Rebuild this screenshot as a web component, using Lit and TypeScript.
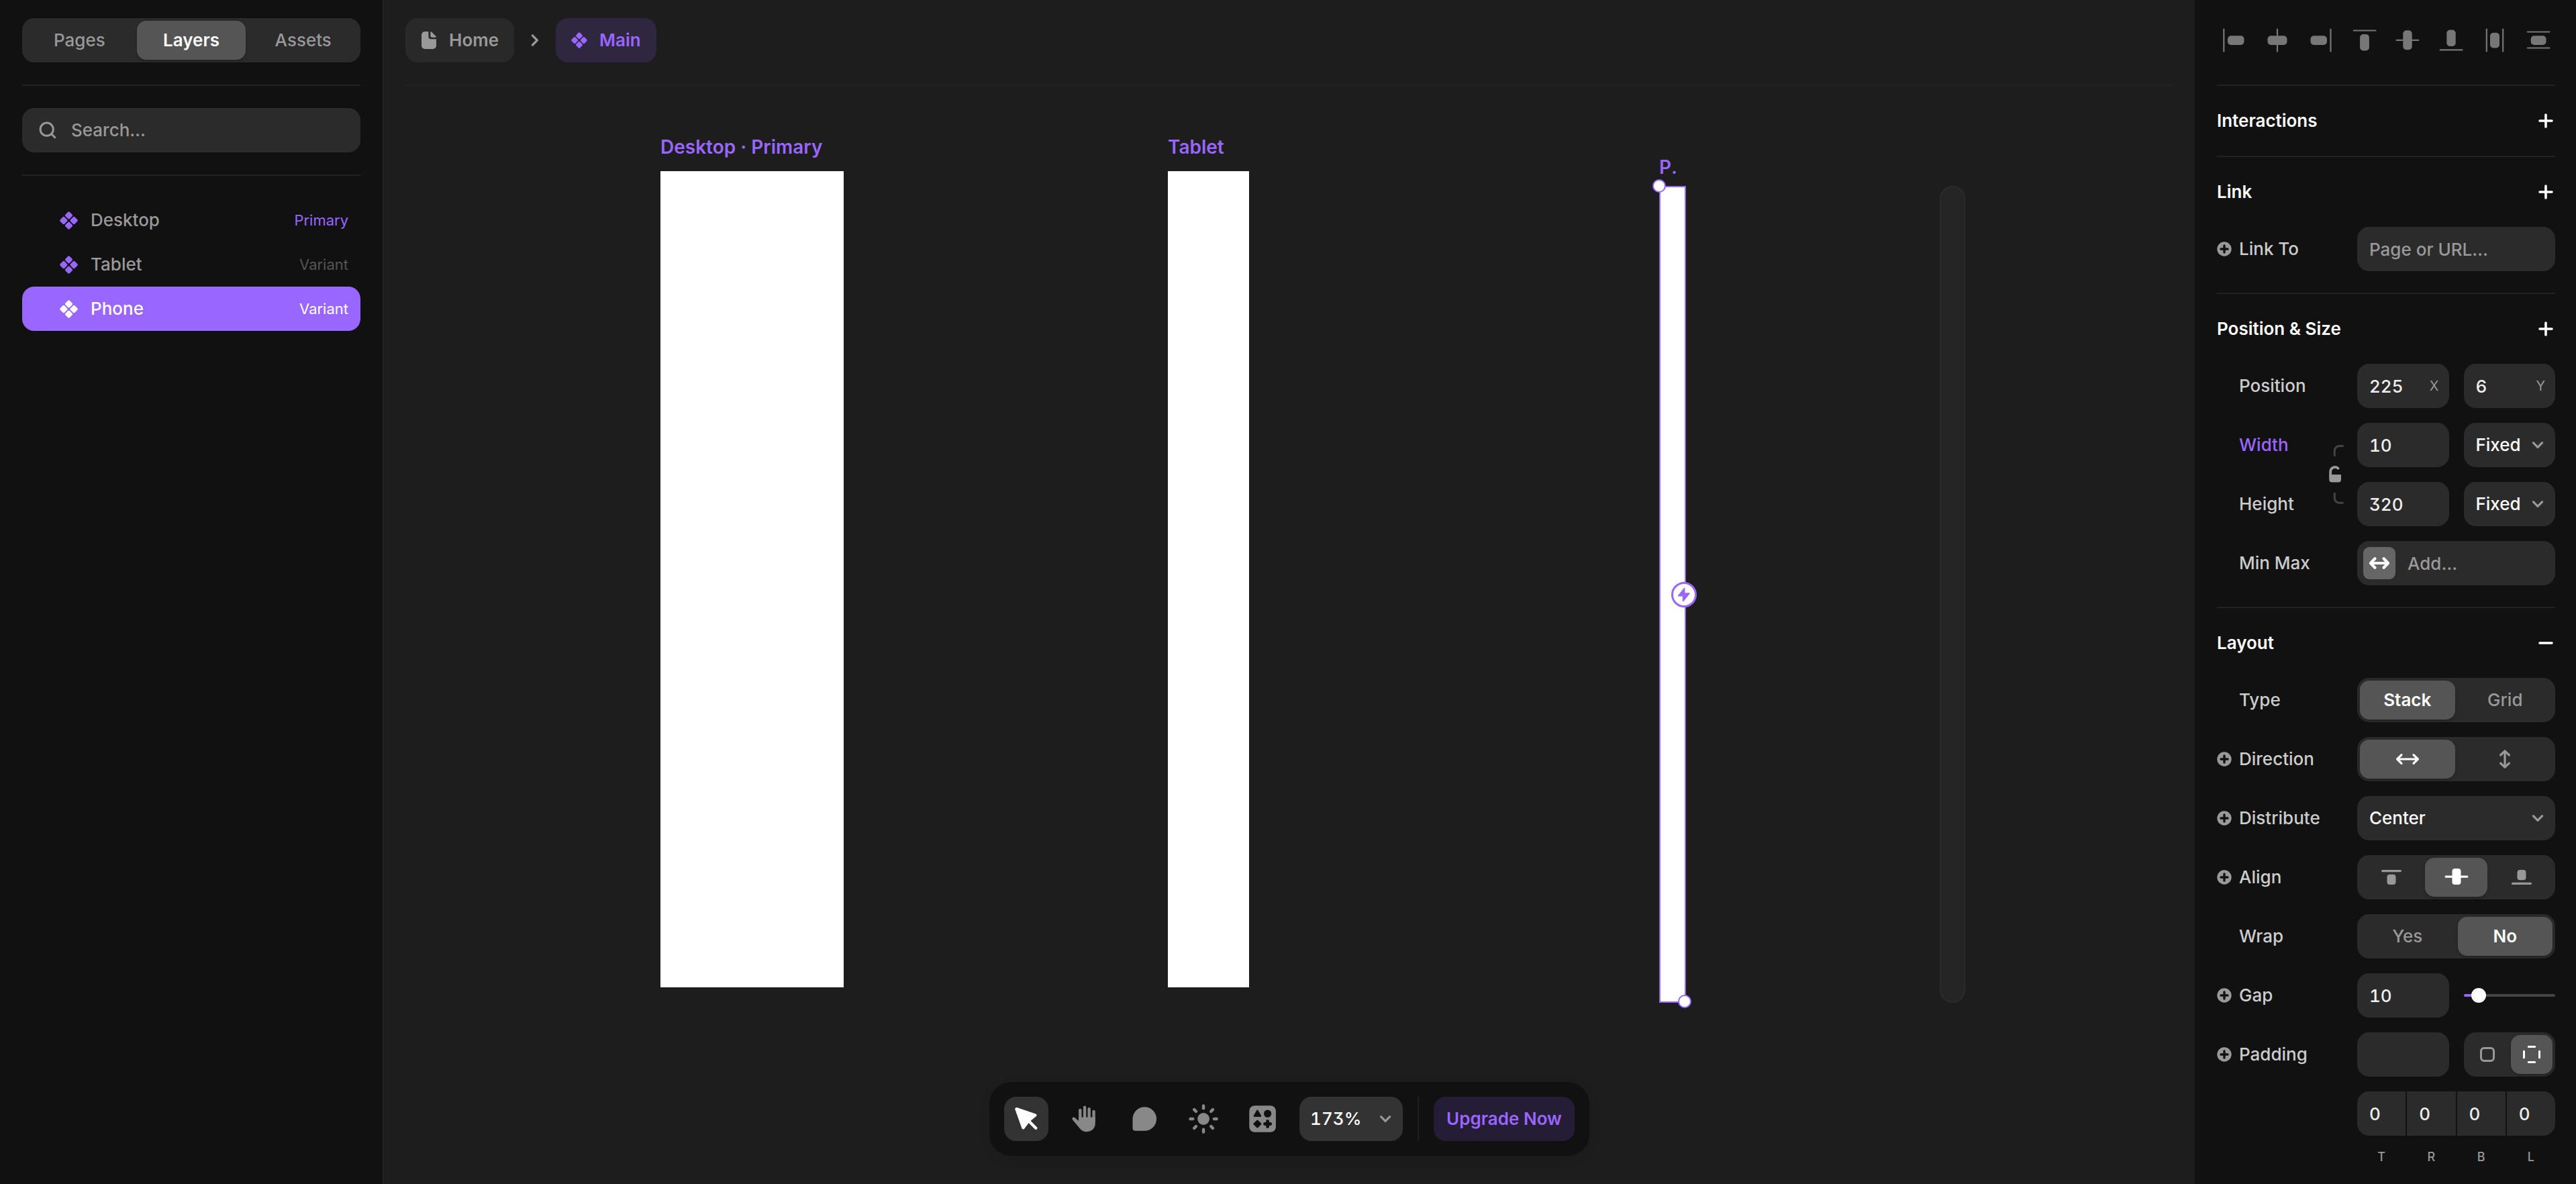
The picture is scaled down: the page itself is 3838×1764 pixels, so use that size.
import { LitElement, html, svg, css, nothing, TemplateResult } from "lit";
import { customElement, state } from "lit/decorators.js";
import { classMap } from "lit/directives/class-map.js";

const chevronDown = html`<svg class="chevron" width="18" height="12" viewBox="0 0 18 12" aria-hidden="true">
  <path d="M2.4 2.6 9 9.4l6.6-6.8" fill="none" stroke="currentColor" stroke-width="3.2" stroke-linecap="round" stroke-linejoin="round" />
</svg>`;

const diamonds = (size: number) => html`<svg width=${size} height=${size} viewBox="0 0 24 24" fill="currentColor" aria-hidden="true">
  ${[[12, 5.2], [18.8, 12], [12, 18.8], [5.2, 12]].map(
    ([x, y]) => svg`<rect x=${x - 4} y=${y - 4} width="8" height="8" rx="1.8" transform="rotate(45 ${x} ${y})" />`
  )}
</svg>`;

const plusBadge = html`<svg width="22" height="22" viewBox="0 0 22 22" aria-hidden="true">
  <circle cx="11" cy="11" r="10.7" fill="#999" />
  <path d="M11 6v10M6 11h10" stroke="#111" stroke-width="3.4" stroke-linecap="round" />
</svg>`;

const plus = html`<svg width="22" height="22" viewBox="0 0 22 22" aria-hidden="true">
  <path d="M11 2v18M2 11h18" stroke="#fff" stroke-width="3.6" stroke-linecap="round" />
</svg>`;

const minus = html`<svg width="22" height="22" viewBox="0 0 22 22" aria-hidden="true">
  <path d="M2 11h18" stroke="#fff" stroke-width="3.6" stroke-linecap="round" />
</svg>`;

const icon40 = (body: TemplateResult) =>
  html`<svg width="40" height="40" viewBox="0 0 40 40" fill="currentColor" aria-hidden="true">${body}</svg>`;

const alignTools: { name: string; art: TemplateResult }[] = [
  { name: "Align left", art: svg`<rect x="4.2" y="2.5" width="2.2" height="35" rx="1"/><rect x="11" y="13.2" width="24.5" height="13.7" rx="5"/>` },
  { name: "Align center", art: svg`<rect x="18.9" y="2.5" width="2.2" height="35" rx="1"/><rect x="5.5" y="13.2" width="29" height="13.7" rx="5"/>` },
  { name: "Align right", art: svg`<rect x="33.4" y="2.5" width="2.2" height="35" rx="1"/><rect x="4.5" y="13.2" width="24.5" height="13.7" rx="5"/>` },
  { name: "Align top", art: svg`<rect x="2.7" y="4.4" width="34.8" height="2.2" rx="1"/><rect x="13.1" y="11" width="13.8" height="24.5" rx="5"/>` },
  { name: "Align middle", art: svg`<rect x="2.7" y="18.7" width="34.8" height="2.2" rx="1"/><rect x="13.3" y="5.2" width="13.4" height="29" rx="5"/>` },
  { name: "Align bottom", art: svg`<rect x="2.7" y="33.3" width="34.8" height="2.2" rx="1"/><rect x="13.3" y="4.5" width="13.4" height="24.5" rx="5"/>` },
  { name: "Distribute horizontally", art: svg`<rect x="6.7" y="2.5" width="2.2" height="35" rx="1"/><rect x="31.1" y="2.5" width="2.2" height="35" rx="1"/><rect x="13" y="8.7" width="14" height="22.8" rx="5"/>` },
  { name: "Distribute vertically", art: svg`<rect x="2.7" y="6.4" width="34.8" height="2.2" rx="1"/><rect x="2.7" y="30.4" width="34.8" height="2.2" rx="1"/><rect x="8.7" y="13.2" width="22.8" height="13.7" rx="5"/>` },
];

const arrowAcross = html`<svg width="36" height="20" viewBox="0 0 36 20" aria-hidden="true">
  <path d="M3 10h30M9 3.6 2.6 10 9 16.4M27 3.6 33.4 10 27 16.4" fill="none" stroke="currentColor" stroke-width="3.2" stroke-linecap="round" stroke-linejoin="round" />
</svg>`;

const arrowDown = html`<svg width="20" height="30" viewBox="0 0 20 30" aria-hidden="true">
  <path d="M10 3v24M3.6 9 10 2.8 16.4 9M3.6 21l6.4 6.2 6.4-6.2" fill="none" stroke="currentColor" stroke-width="3.2" stroke-linecap="round" stroke-linejoin="round" />
</svg>`;

const tools: { id: string; name: string; art: TemplateResult }[] = [
  {
    id: "select",
    name: "Select",
    art: svg`<path d="M18.4 18.2 46.2 27.6 36.4 35.6 28.4 46.2z" fill="currentColor" stroke="currentColor" stroke-width="4.4" stroke-linejoin="round"/>
      <path d="M36 35.5 47.2 46.8" stroke="currentColor" stroke-width="4.4" stroke-linecap="round"/>`,
  },
  {
    id: "hand",
    name: "Hand",
    art: svg`<path d="M25.2 20v14M32 15.7v16M38.6 18.2v14M45.5 22v14" stroke="currentColor" stroke-width="4.4" stroke-linecap="round"/>
      <path d="M23 30.6h24.7v9c0 7.6-5.4 12.6-12.7 12.6-5.2 0-8.6-2.4-11.3-6.2L14 34.4c-1.900-2.6 1.2-5 3.5-3.1L23 36z" fill="currentColor"/>`,
  },
  {
    id: "comment",
    name: "Comment",
    art: svg`<path d="M15.4 33A17.8 17.8 0 1 1 33.2 50.8H19.4a4 4 0 0 1-4-4z" fill="currentColor"/>`,
  },
  {
    id: "theme",
    name: "Theme",
    art: svg`<circle cx="33" cy="33" r="8.9" fill="currentColor"/>
      ${[0, 45, 90, 135, 180, 225, 270, 315].map(
        (a) => svg`<path d="M33 13.4v3.8" transform="rotate(${a} 33 33)" stroke="currentColor" stroke-width="4.4" stroke-linecap="round"/>`
      )}`,
  },
  {
    id: "insert",
    name: "Insert",
    art: svg`<rect x="13.2" y="13.2" width="39.6" height="39.6" rx="8" fill="currentColor"/>
      <path d="M25.3 20.8 29.8 28.6H20.8z" fill="#111" stroke="#111" stroke-width="2.6" stroke-linejoin="round"/>
      <circle cx="40.5" cy="25.2" r="5.6" fill="#111"/>
      <path d="M25.3 35.8 30 40.5 25.3 45.2 20.6 40.5z" fill="#111" stroke="#111" stroke-width="2.6" stroke-linejoin="round"/>
      <path d="M40.5 36.4v8.2M36.4 40.5h8.2" stroke="#111" stroke-width="4.8" stroke-linecap="round"/>`,
  },
];

interface Layer {
  name: string;
  tag: string;
}

const layers: Layer[] = [
  { name: "Desktop", tag: "Primary" },
  { name: "Tablet", tag: "Variant" },
  { name: "Phone", tag: "Variant" },
];

interface Option {
  id: string;
  name: string;
  art?: TemplateResult;
}

@customElement("app-root")
export class AppRoot extends LitElement {
  static styles = css`
    :host {
      --panel: #111;
      --field: #2b2b2b;
      --line: #222;
      --accent: #96f;
      display: grid;
      grid-template-columns: 572px minmax(0, 1fr) 568px;
      height: 100vh;
      background: #1d1d1d;
      color: #ccc;
      font: 500 26px/32px Inter, "Liberation Sans", sans-serif;
      overflow: hidden;
    }
    * {
      box-sizing: border-box;
    }
    svg {
      display: block;
      flex: none;
    }
    button,
    input,
    select {
      font: inherit;
      color: inherit;
      border: 0;
      margin: 0;
      padding: 0;
      background: none;
      outline: none;
    }
    input,
    select {
      font-feature-settings: "tnum", "cv09";
    }
    a {
      color: inherit;
      text-decoration: none;
    }
    .panel {
      background: var(--panel);
      min-width: 0;
    }
    .left {
      padding: 0 33px;
      border-right: 2px solid var(--line);
    }
    .right {
      padding: 0 31px 0 33px;
    }
    .bar {
      display: flex;
      align-items: center;
      height: 128px;
      padding: 27px 0 33px;
      border-bottom: 2px solid var(--line);
    }
    .seg {
      display: flex;
      gap: 4px;
      width: 100%;
      height: 66px;
      padding: 4px;
      border-radius: 18px;
      background: var(--field);
      color: #999;
    }
    .seg button {
      flex: 1 1 0;
      min-width: 0;
      display: flex;
      align-items: center;
      justify-content: center;
      border-radius: 14px;
    }
    .seg .on {
      background: #555;
      color: #fff;
      font-weight: 600;
      box-shadow: 0 2px 4px rgba(0, 0, 0, 0.2);
    }
    .search {
      display: flex;
      align-items: center;
      height: 134px;
      border-bottom: 2px solid var(--line);
    }
    .search label {
      display: flex;
      align-items: center;
      gap: 22px;
      width: 100%;
      height: 66px;
      padding: 0 25px;
      border-radius: 18px;
      background: var(--field);
      color: #999;
    }
    .search input {
      flex: 1;
      min-width: 0;
    }
    ::placeholder {
      color: #999;
      opacity: 1;
    }
    .layers {
      list-style: none;
      margin: 0;
      padding: 33px 0 0;
    }
    .layers button {
      display: flex;
      align-items: center;
      gap: 19px;
      width: 100%;
      height: 66px;
      padding: 0 18px 0 56px;
      border-radius: 18px;
      color: #999;
      text-align: left;
    }
    .layers svg {
      color: var(--accent);
    }
    .layers .tag {
      margin-left: auto;
      font-size: 22px;
      font-weight: 400;
      color: #555;
    }
    .layers .primary {
      color: var(--accent);
    }
    .layers .on {
      background: var(--accent);
    }
    .layers .on,
    .layers .on .tag,
    .layers .on svg {
      color: #fff;
    }
    .canvas {
      position: relative;
      min-width: 0;
      padding: 0 32px;
    }
    .crumb {
      display: flex;
      align-items: center;
      gap: 18px;
      height: 66px;
      padding: 0 23px;
      border-radius: 18px;
      background: #292929;
      color: #999;
      font-weight: 600;
    }
    .crumb.here {
      background: #2f273f;
      color: var(--accent);
    }
    .sep {
      margin: 0 24px;
    }
    .frame {
      position: absolute;
      background: #fff;
    }
    .frame span {
      position: absolute;
      left: 0;
      bottom: 100%;
      padding-bottom: 20px;
      color: var(--accent);
      font-size: 28px;
      font-weight: 600;
      white-space: nowrap;
    }
    .desktop {
      left: 412px;
      top: 255px;
      width: 273px;
      height: 1216px;
    }
    .tablet {
      left: 1168px;
      top: 255px;
      width: 121px;
      height: 1216px;
    }
    .phone {
      left: 1900px;
      top: 277px;
      width: 40px;
      height: 1217px;
      border: 2px solid var(--accent);
    }
    .frame.phone span {
      left: -2px;
      padding-bottom: 14px;
      font-kerning: none;
    }
    .ghost {
      position: absolute;
      left: 2318px;
      top: 277px;
      width: 38px;
      height: 1217px;
      border: 2px solid #2b2b2b;
      border-radius: 19px;
      background: #252525;
    }
    .knob {
      position: absolute;
      width: 20px;
      height: 20px;
      border: 2px solid var(--accent);
      border-radius: 50%;
      background: #fff;
    }
    .nw {
      left: -12px;
      top: -12px;
    }
    .se {
      right: -10px;
      bottom: -10px;
    }
    .bolt {
      position: absolute;
      right: -18px;
      top: calc(50% - 19px);
      width: 38px;
      height: 38px;
      display: grid;
      place-items: center;
      border: 3px solid var(--accent);
      border-radius: 50%;
      background: #fff;
    }
    .toolbar {
      position: absolute;
      left: 50%;
      bottom: 42px;
      transform: translateX(-50%);
      display: flex;
      gap: 22px;
      padding: 22px;
      border-radius: 33px;
      background: var(--panel);
      color: #888;
      box-shadow: 0 4px 16px rgba(0, 0, 0, 0.1);
    }
    .toolbar .tool {
      width: 66px;
      height: 66px;
      border-radius: 18px;
    }
    .toolbar .on {
      background: #333;
      color: #fff;
    }
    .rule {
      width: 2px;
      background: var(--line);
    }
    .upgrade {
      display: flex;
      align-items: center;
      height: 66px;
      padding: 0 19px;
      border-radius: 18px;
      background: #251c36;
      color: var(--accent);
      font-weight: 600;
      white-space: nowrap;
    }
    .pick {
      position: relative;
      display: flex;
      align-items: center;
      min-width: 0;
      height: 66px;
      border-radius: 18px;
      background: var(--field);
      color: #fff;
    }
    .pick select {
      appearance: none;
      width: 100%;
      height: 100%;
      padding: 0 36px 0 18px;
    }
    .pick .chevron {
      position: absolute;
      right: 17px;
      color: #999;
      pointer-events: none;
    }
    .zoom {
      width: 154px;
      background: #333;
    }
    .zoom select {
      padding-left: 16px;
    }
    .aligns {
      justify-content: space-between;
      color: #777;
    }
    .aligns button {
      width: 50px;
      height: 66px;
      display: grid;
      place-items: center;
    }
    .group {
      padding-bottom: 32px;
      border-bottom: 2px solid var(--line);
    }
    .group.closed {
      padding-bottom: 0;
    }
    .group:last-child {
      padding-bottom: 0;
      border-bottom: 0;
    }
    .head {
      display: flex;
      align-items: center;
      justify-content: space-between;
      height: 104px;
      color: #fff;
    }
    .head h2 {
      margin: 0;
      font: inherit;
      font-weight: 600;
    }
    .head button {
      padding: 4px 3px;
    }
    .rows {
      display: grid;
      gap: 22px;
    }
    .row {
      display: grid;
      grid-template-columns: minmax(0, 1fr) 295px;
      align-items: center;
    }
    .pair {
      display: grid;
      grid-template-columns: minmax(0, 1fr) 24px 295px;
      column-gap: 19px;
      row-gap: 22px;
      align-items: center;
    }
    .link {
      grid-column: 2;
      grid-row: 1 / span 2;
    }
    .name {
      display: flex;
      align-items: center;
      gap: 11px;
      padding-left: 33px;
      white-space: nowrap;
    }
    .name.more {
      padding-left: 0;
    }
    .name.active {
      color: var(--accent);
    }
    .fields {
      display: grid;
      grid-auto-flow: column;
      grid-auto-columns: minmax(0, 1fr);
      gap: 22px;
      min-width: 0;
    }
    .box {
      display: flex;
      align-items: center;
      min-width: 0;
      height: 66px;
      padding: 0 15px 0 18px;
      border-radius: 18px;
      background: var(--field);
      color: #eee;
    }
    .box input {
      flex: 1;
      width: 0;
      min-width: 0;
      height: 100%;
    }
    .unit {
      color: #999;
      font-size: 20px;
      font-weight: 400;
    }
    .chip {
      width: 48px;
      height: 48px;
      margin: 0 18px 0 -9px;
      display: grid;
      place-items: center;
      border-radius: 9px;
      background: #666;
      color: #fff;
    }
    .slider {
      appearance: none;
      width: 100%;
      min-width: 0;
      height: 66px;
    }
    .slider::-webkit-slider-runnable-track {
      height: 4px;
      border-radius: 2px;
      background: linear-gradient(90deg, var(--accent) 22px, #444 22px);
    }
    .slider::-webkit-slider-thumb {
      appearance: none;
      width: 22px;
      height: 22px;
      margin-top: -9px;
      border-radius: 50%;
      background: #fff;
    }
    .quad {
      display: grid;
      grid-template-columns: repeat(4, minmax(0, 1fr));
      column-gap: 2px;
      row-gap: 20px;
      grid-column: 2;
      color: #eee;
    }
    .quad label {
      display: contents;
    }
    .quad input {
      grid-row: 1;
      width: 100%;
      min-width: 0;
      height: 66px;
      padding-left: 18px;
      background: var(--field);
    }
    .quad span {
      grid-row: 2;
      text-align: center;
      font-size: 18px;
      line-height: 24px;
      color: #999;
    }
    .quad label:first-child input {
      border-radius: 18px 0 0 18px;
    }
    .quad label:last-child input {
      border-radius: 0 18px 18px 0;
    }
  `;

  @state() private choice: Record<string, string> = {
    view: "Layers",
    layer: "Phone",
    tool: "select",
    type: "Stack",
    direction: "Horizontal",
    align: "Middle",
    wrap: "No",
    sides: "Each side",
  };

  private set(key: string, id: string) {
    this.choice = { ...this.choice, [key]: id };
  }

  private segmented(key: string, label: string, options: Option[]) {
    return html`<div class="seg" role="group" aria-label=${label}>
      ${options.map((o) => {
        const on = this.choice[key] === o.id;
        return html`<button
          type="button"
          class=${classMap({ on })}
          aria-pressed=${on}
          aria-label=${o.name}
          @click=${() => this.set(key, o.id)}
        >${o.art ?? o.name}</button>`;
      })}
    </div>`;
  }

  private words(...names: string[]): Option[] {
    return names.map((name) => ({ id: name, name }));
  }

  private row(name: string, body: TemplateResult, more = false, forId?: string) {
    const inner = html`${more ? plusBadge : nothing}${name}`;
    return html`<div class="row">
      ${forId
        ? html`<label class=${classMap({ name: true, more })} for=${forId}>${inner}</label>`
        : html`<div class=${classMap({ name: true, more })}>${inner}</div>`}
      <div class="fields">${body}</div>
    </div>`;
  }

  private group(title: string, open: boolean, rows?: TemplateResult) {
    return html`<section class=${classMap({ group: true, closed: !rows })}>
      <div class="head">
        <h2>${title}</h2>
        <button type="button" aria-label=${(open ? "Remove " : "Add ") + title}>${open ? minus : plus}</button>
      </div>
      ${rows ? html`<div class="rows">${rows}</div>` : nothing}
    </section>`;
  }

  private size(name: string, id: string, value: string, active: boolean, line: number) {
    return html`<label class=${classMap({ name: true, active })} for=${id} style="grid-row: ${line}">${name}</label>
      <div class="fields" style="grid-row: ${line}; grid-column: 3">
        <div class="box"><input id=${id} type="text" .value=${value} /></div>
        <div class="pick">
          <select aria-label="${name} mode">
            <option>Fixed</option>
            <option>Fill</option>
            <option>Fit</option>
          </select>
          ${chevronDown}
        </div>
      </div>`;
  }

  private renderLeft() {
    return html`<aside class="panel left">
      <div class="bar">${this.segmented("view", "Panel", this.words("Pages", "Layers", "Assets"))}</div>
      <div class="search">
        <label>
          <svg width="26" height="26" viewBox="0 0 26 26" fill="none" stroke="currentColor" stroke-width="3" stroke-linecap="round" aria-hidden="true">
            <circle cx="11.7" cy="11.7" r="9.6" />
            <path d="m18.8 18.8 5 5" />
          </svg>
          <input type="search" placeholder="Search…" aria-label="Search" />
        </label>
      </div>
      <ul class="layers">
        ${layers.map(
          (l) => html`<li>
            <button type="button" class=${classMap({ on: this.choice.layer === l.name })} @click=${() => this.set("layer", l.name)}>
              ${diamonds(27)}<span>${l.name}</span>
              <span class=${classMap({ tag: true, primary: l.tag === "Primary" })}>${l.tag}</span>
            </button>
          </li>`
        )}
      </ul>
    </aside>`;
  }

  private renderCanvas() {
    return html`<main class="canvas">
      <nav class="bar" aria-label="Breadcrumb">
        <a class="crumb" href="#home">
          <svg width="24" height="26" viewBox="-1 0 24 26" fill="currentColor" aria-hidden="true">
            <path d="M5 0h5.4v7.6a3.6 3.6 0 0 0 3.6 3.6h8V21a5 5 0 0 1-5 5H5a5 5 0 0 1-5-5V5a5 5 0 0 1 5-5z" />
            <path d="M13.4 1.2c0-1 .9-1.3 1.6-.6l6.4 6.4c.8.8.5 1.7-.6 1.7h-5.4a2 2 0 0 1-2-2z" />
          </svg>
          Home
        </a>
        <svg class="sep" width="14" height="20" viewBox="0 0 14 20" aria-hidden="true">
          <path d="M3.4 3 10.4 10l-7 7" fill="none" stroke="#999" stroke-width="3.2" stroke-linecap="round" stroke-linejoin="round" />
        </svg>
        <a class="crumb here" href="#main">${diamonds(24)} Main</a>
      </nav>
      <div class="frame desktop"><span>Desktop · Primary</span></div>
      <div class="frame tablet"><span>Tablet</span></div>
      <div class="frame phone">
        <span>P.</span>
        <i class="knob nw"></i>
        <i class="knob se"></i>
        <i class="bolt">
          <svg width="20" height="22" viewBox="0 0 20 22" fill="var(--accent)" stroke="var(--accent)" stroke-width="1.6" stroke-linejoin="round" aria-hidden="true">
            <path d="M10.6 1.4 1.8 12.6h6.8v8L18 9h-7.4z" />
          </svg>
        </i>
      </div>
      <div class="ghost"></div>
      <div class="toolbar" role="toolbar" aria-label="Tools">
        ${tools.map(
          (t) => html`<button
            type="button"
            class=${classMap({ tool: true, on: this.choice.tool === t.id })}
            aria-label=${t.name}
            @click=${() => this.set("tool", t.id)}
          ><svg width="66" height="66" viewBox="0 0 66 66" fill="none" aria-hidden="true">${t.art}</svg></button>`
        )}
        <div class="pick zoom">
          <select aria-label="Zoom level">
            <option>173%</option>
            <option>100%</option>
            <option>50%</option>
          </select>
          ${chevronDown}
        </div>
        <div class="rule"></div>
        <a class="upgrade" href="#upgrade">Upgrade Now</a>
      </div>
    </main>`;
  }

  private renderRight() {
    const positionRows = html`
      ${this.row(
        "Position",
        html`<label class="box"><input id="pos-x" type="text" value="225" /><span class="unit">X</span></label>
          <label class="box"><input type="text" value="6" /><span class="unit">Y</span></label>`,
        false,
        "pos-x"
      )}
      <div class="pair">
        ${this.size("Width", "width", "10", true, 1)} ${this.size("Height", "height", "320", false, 2)}
        <svg class="link" width="24" height="92" viewBox="0 0 24 92" fill="none" stroke-linecap="round" aria-hidden="true">
          <path d="M9.3 17.6v-7a7 7 0 0 1 7-7h5.2M9.3 74.2v7a7 7 0 0 0 7 7h5.2" stroke="#444" stroke-width="3" />
          <path d="M3.2 48v-6.2a6.8 6.8 0 0 1 11.4-5" stroke="#999" stroke-width="3.8" />
          <path d="M1.3 46h17.700v7.4a4 4 0 0 1-4 4H5.3a4 4 0 0 1-4-4z" fill="#999" />
        </svg>
      </div>
      ${this.row(
        "Min Max",
        html`<div class="box">
          <button type="button" class="chip" aria-label="Limit width">
            <svg width="32" height="22" viewBox="0 0 32 22" aria-hidden="true">
              <path d="M3.5 11h25M9.4 4.2 3 11l6.4 6.8M22.6 4.2 29 11l-6.4 6.8" fill="none" stroke="currentColor" stroke-width="4.2" stroke-linecap="round" stroke-linejoin="round" />
            </svg>
          </button>
          <input id="minmax" type="text" placeholder="Add…" />
        </div>`,
        false,
        "minmax"
      )}
    `;

    const layoutRows = html`
      ${this.row("Type", this.segmented("type", "Type", this.words("Stack", "Grid")))}
      ${this.row(
        "Direction",
        this.segmented("direction", "Direction", [
          { id: "Horizontal", name: "Horizontal", art: arrowAcross },
          { id: "Vertical", name: "Vertical", art: arrowDown },
        ]),
        true
      )}
      ${this.row(
        "Distribute",
        html`<div class="pick">
          <select id="distribute">
            <option>Center</option>
            <option>Start</option>
            <option>End</option>
          </select>
          ${chevronDown}
        </div>`,
        true,
        "distribute"
      )}
      ${this.row(
        "Align",
        this.segmented("align", "Align", [
          { id: "Top", name: "Top", art: icon40(svg`<rect x="5" y="8.9" width="30" height="3.3" rx="1.6"/><rect x="13.5" y="15.7" width="13" height="15.3" rx="4"/>`) },
          { id: "Middle", name: "Middle", art: icon40(svg`<rect x="2.5" y="17.4" width="35" height="3.3" rx="1.6"/><rect x="13.5" y="7" width="13" height="24" rx="4"/>`) },
          { id: "Bottom", name: "Bottom", art: icon40(svg`<rect x="5" y="27.7" width="30" height="3.3" rx="1.6"/><rect x="13.5" y="9" width="13" height="15.3" rx="4"/>`) },
        ]),
        true
      )}
      ${this.row("Wrap", this.segmented("wrap", "Wrap", this.words("Yes", "No")))}
      ${this.row(
        "Gap",
        html`<div class="box"><input id="gap" type="text" value="10" /></div>
          <input class="slider" type="range" min="0" max="100" value="10" aria-label="Gap amount" />`,
        true,
        "gap"
      )}
      ${this.row(
        "Padding",
        html`<div class="box"><input id="padding" type="text" /></div>
          ${this.segmented("sides", "Padding sides", [
            {
              id: "All sides",
              name: "All sides",
              art: icon40(svg`<rect x="10.5" y="10.5" width="19" height="19" rx="4.5" fill="none" stroke="currentColor" stroke-width="3"/>`),
            },
            {
              id: "Each side",
              name: "Each side",
              art: icon40(svg`<path d="M15.3 8.5h9.4M15.3 31.5h9.4M8.5 15.3v9.4M31.5 15.3v9.4" stroke="currentColor" stroke-width="3" stroke-linecap="round"/>`),
            },
          ])}`,
        true,
        "padding"
      )}
      <div class="row">
        <div class="quad">
          ${["T", "R", "B", "L"].map((s) => html`<label><input type="text" value="0" /><span>${s}</span></label>`)}
        </div>
      </div>
    `;

    return html`<aside class="panel right">
      <div class="bar aligns" role="toolbar" aria-label="Align and distribute">
        ${alignTools.map((t) => html`<button type="button" aria-label=${t.name}>${icon40(t.art)}</button>`)}
      </div>
      ${this.group("Interactions", false)}
      ${this.group(
        "Link",
        false,
        this.row("Link To", html`<div class="box"><input id="link-to" type="text" placeholder="Page or URL…" /></div>`, true, "link-to")
      )}
      ${this.group("Position & Size", false, positionRows)} ${this.group("Layout", true, layoutRows)}
    </aside>`;
  }

  render() {
    return html`${this.renderLeft()}${this.renderCanvas()}${this.renderRight()}`;
  }
}
